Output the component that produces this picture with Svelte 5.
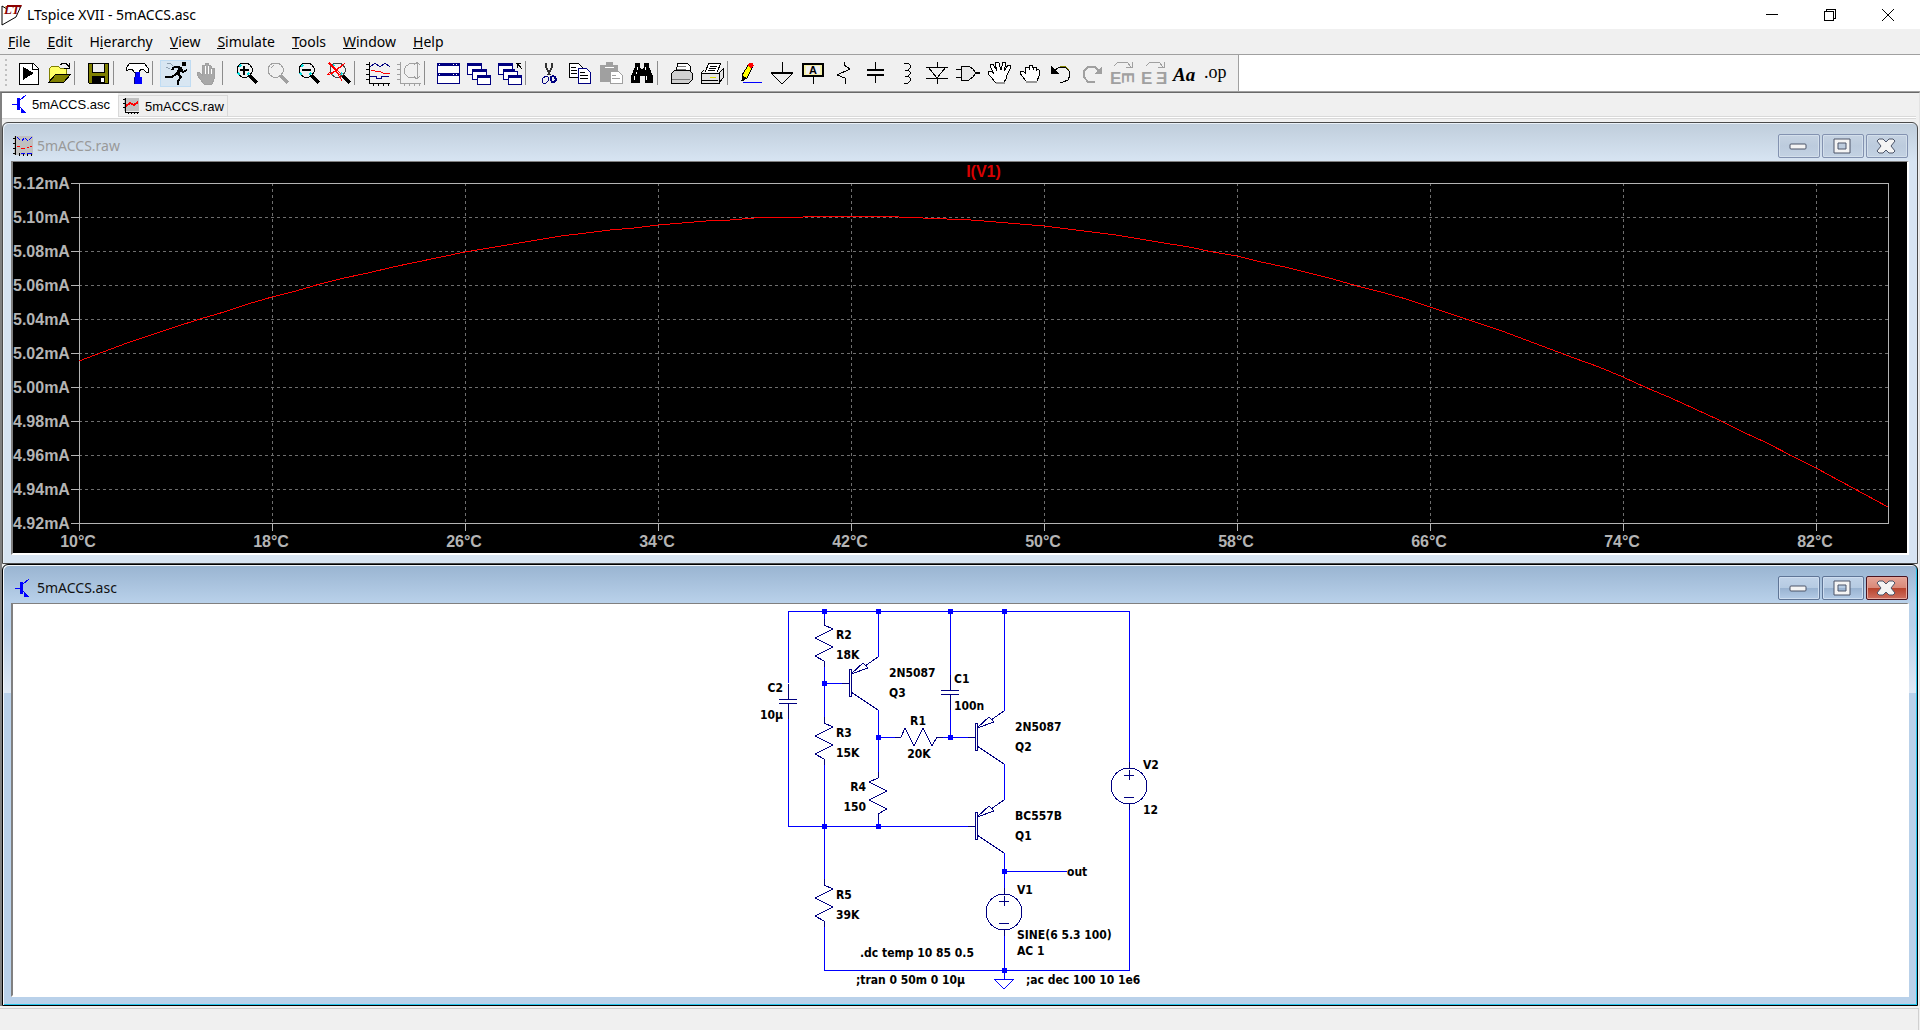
<script lang="ts">
  // One drawn path of an icon: d, stroke, fill, stroke width
  type Shape = [string, string?, string?, number?];
  type Glyph = { t: string; x: number; y: number; size: number; fill?: string; cls?: string; turn?: string };
  type Tool = { label: string; shapes: Shape[]; glyphs?: Glyph[]; active?: boolean; disabled?: boolean };

  const K = '#000';
  const N = '#000080';
  const G = '#a0a0a0';
  const W = '#fff';
  const OLIVE = '#808000';

  const lens = (line: string, dark: string): Shape[] => [
    ['M8 2h5l3 2 2 3v4l-2 3-3 2h-5l-3-2-2-3v-4l2-3z', line, 'none', 1],
    ['M16 15l7 7', dark, 'none', 3]
  ];
  const cyan: Shape = ['M5 6l2-2M13 14l2-2M4 12l2 2', '#00e0e0', 'none', 2];

  const smallWindows: Shape[] = [
    ['M0 2h14v11h-14z', N, W],
    ['M0 3h14', N, 'none', 3],
    ['M5 8h14v10h-14z', N, W],
    ['M5 9h14', N, 'none', 3],
    ['M10 14h13v9h-13z', N, W],
    ['M10 15h13', N, 'none', 3]
  ];

  const groups: Tool[][] = [
    [
      {
        label: 'New Schematic',
        shapes: [['M3 2h14l5 5v16h-19z', K, W], ['M16 2v6h6', K], ['M7 6l11 6-11 7z', 'none', K]]
      },
      {
        label: 'Open',
        shapes: [
          ['M2 20v-12l3-3h6l2 2h6v6', OLIVE, '#ffff66'],
          ['M2 21l7-8h15l-7 8z', K, OLIVE],
          ['M13 4l3-2h3l3 4M22 2v5h-5', K]
        ]
      }
    ],
    [
      {
        label: 'Save',
        shapes: [
          ['M2 2h20v20h-19l-1-1z', K, OLIVE],
          ['M6 2h12v9h-12z', K, '#efefef'],
          ['M6 15h13v7h-13z', 'none', K],
          ['M15 17h3v4h-3z', 'none', W]
        ]
      }
    ],
    [
      {
        label: 'Control Panel',
        shapes: [
          ['M1 8l3-5 4-1h11l4 5v4h-2l-3-3h-2l-2 3h-5l-2-3h-3l-2 2z', K, W],
          ['M10 11h5v5h2v7h-8v-7h1z', 'none', '#0000ff'],
          ['M10 11v5M9 17v6', '#000080']
        ]
      }
    ],
    [
      {
        label: 'Run',
        active: true,
        shapes: [
          ['M18 1h4v4h-4z', 'none', K],
          ['M17 6l-4 8', K, 'none', 4],
          ['M15 6h-5l-2 3M17 8l2 3 4-2', K, 'none', 2],
          ['M12 13l-4 3h-7M14 13l3 3-3 4v4', K, 'none', 2],
          ['M3 2l4 1 3 3M2 6l4 2', '#8fa0b0']
        ]
      },
      {
        label: 'Halt',
        disabled: true,
        shapes: [
          ['M7 14v-9l1-1h2v-2h3v2h2l1 1v2h3v11l-2 5h-8l-7-9v-2l2-1z', 'none', '#a8a8a8'],
          ['M10 5v8M13 4v9M16 6v7', W],
          ['M7 14v-9l1-1h2v-2h3v2h2l1 1v2h3v11l-2 5h-8l-7-9v-2l2-1z', G]
        ]
      }
    ],
    [
      { label: 'Zoom In', shapes: [...lens(K, K), cyan, ['M10 5v9M6 9h9', K, 'none', 2]] },
      { label: 'Pan', disabled: true, shapes: [...lens(G, G), ['M6 7l3-3', G, 'none', 1]] },
      { label: 'Zoom Out', shapes: [...lens(K, K), cyan, ['M6 9h9', K, 'none', 2]] },
      {
        label: 'Zoom Full Extents',
        shapes: [
          ...lens('#444', K),
          cyan,
          ['M1 2h3M2 1l6 7 7 12M18 2l-8 7-9 5M5 4l9 9M3 11l-3 3', '#ff0000', 'none', 1],
          ['M2 3l13 13M16 3l-12 11', '#ff0000', 'none', 1]
        ]
      }
    ],
    [
      {
        label: 'Autorange Y-axis',
        shapes: [
          ['M3 1v21h21M0 3h3M0 8h3M0 13h3M0 18h3M7 22v3M12 22v3M17 22v3M22 22v3', K],
          ['M4 6l5-4 5 4 5-4 5 4', N],
          ['M5 9l4 1 4 0 4 2h7', '#ff0000'],
          ['M4 15h6v2h5v-2h8', N]
        ]
      },
      {
        label: 'Plot Settings',
        disabled: true,
        shapes: [
          ['M3 1v21h21M0 3h3M0 8h3M0 13h3M0 18h3M7 22v3M12 22v3M17 22v3M22 22v3', G],
          ['M20 2h-6l-5 3-2 4v3l4 4h5l4 2', G],
          ['M20 1v17M17 4l3-3 3 3M17 15l3 3 3-3', G]
        ]
      }
    ],
    [
      {
        label: 'Tile Windows',
        shapes: [
          ['M1 2h22v20h-22z', N, W],
          ['M1 3h22M1 13h22', N, 'none', 3],
          ['M3 3h1M17 3h1M20 3h1M3 13h1M17 13h1M20 13h1', W]
        ]
      },
      { label: 'Cascade Windows', shapes: smallWindows },
      {
        label: 'Close All Windows',
        shapes: [...smallWindows, ['M17 0h9v10h-9z', 'none', '#f0f0f0'], ['M18 2h5M19 2v5M19 2l5 6', K]]
      }
    ],
    [
      {
        label: 'Cut',
        shapes: [
          ['M9 2v4l4 8M15 2v4l-4 8', '#333', 'none', 2],
          ['M6 17l3-2 2 1v4l-2 2h-3l-1-2z', N, 'none', 1],
          ['M14 16l2-1 2 1 1 3-2 2h-2l-1-2z', N, 'none', 2]
        ]
      },
      {
        label: 'Copy',
        shapes: [
          ['M1 2h9l4 4v10h-13z', K, W],
          ['M3 6h5M3 9h6M3 12h6', K],
          ['M10 7h8l4 4v11h-12z', N, W],
          ['M12 11h5M12 14h8M12 17h8', K]
        ]
      },
      {
        label: 'Paste',
        disabled: true,
        shapes: [
          ['M1 4h6v-3h7v3h5v17h-18z', 'none', G],
          ['M6 6h9', W],
          ['M11 10h8l4 4v8h-12z', G, W],
          ['M13 14h4M13 17h8', G]
        ]
      },
      {
        label: 'Find',
        shapes: [
          ['M5 2h5v4l2 3 2-3v-4h5v4l4 9v7h-8v-7h-5v7h-9v-7l4-9z', 'none', K],
          ['M7 6v3M15 6v3M4 15v4M16 15v4M6 11v2', W, 'none', 1]
        ]
      }
    ],
    [
      {
        label: 'Print Preview',
        shapes: [
          ['M7 10l2-8h9l3 3v6', K, W],
          ['M2 13l4-4h14l3 3v7l-3 3h-18z', K, '#d0d0d0'],
          ['M3 18h18M9 5h8M8 8h9', '#777']
        ]
      },
      {
        label: 'Print',
        shapes: [
          ['M5 11l4-9h12l-4 9', K, W],
          ['M1 12h18v10h-18zM19 12l4-4v9l-4 5M1 12l3-3', K, '#e4e4e4'],
          ['M10 5h7M9 7h7M8 9h7M2 19h16', K],
          ['M10 16h6', '#e0e000']
        ]
      }
    ],
    [
      {
        label: 'Draw Wire',
        shapes: [
          ['M3 14l7-11 4 2-6 12-5 3z', K, '#ffff00'],
          ['M10 2h4l1 3-3 2-3-2z', 'none', '#ff0000'],
          ['M2 20l2-5 4 2z', 'none', K],
          ['M4 21h19', '#0000ff']
        ]
      },
      { label: 'Place Ground', shapes: [['M12 1v11M1 12h22l-11 11z', K, 'none', 1], ['M1 12h22', K, 'none', 2]] },
      {
        label: 'Label Net',
        shapes: [['M2 3h20v12h-20z', K, '#f4f0a8', 2], ['M5 5h14v8h-14z', 'none', '#f0f0f0'], ['M12 16v7', K]],
        glyphs: [{ t: 'A', x: 8, y: 13, size: 11 }]
      },
      { label: 'Place Resistor', shapes: [['M12 1v3l6 4-13 6 8 3v6', K]] },
      { label: 'Place Capacitor', shapes: [['M12 1v7M12 15v7', K, 'none', 1], ['M4 9h17M4 14h17', K, 'none', 2]] },
      {
        label: 'Place Inductor',
        shapes: [['M10 2h4l2 2v3l-2 2h-3M14 9l2 2v2l-2 2h-3M14 15l2 2v3l-2 2h-4', K, 'none', 1]]
      },
      { label: 'Place Diode', shapes: [['M12 1v5M12 17v6M1 6h22M1 17h22M3 6l9 11 9-11', K]] },
      {
        label: 'Place Component',
        shapes: [['M5 5h8l4 3 2 3v2l-2 3-4 3h-8zM0 8h5M0 16h5', K, '#e8e8e8'], ['M19 12h5', K, 'none', 2]]
      },
      {
        label: 'Move',
        shapes: [
          ['M8 21l-3-4-4-4v-3h3l3 3-4-8 1-2h2l4 7-2-8 2-1 2 1 2 7 2-8h2l1 2-2 7 4-6h2l1 2-4 8-1 4-3 5z', K, W],
          ['M9 22h9', '#999', 'none', 2]
        ]
      },
      {
        label: 'Drag',
        shapes: [
          ['M8 20l-4-5-2-3v-2h3l2 2v-5l2-1 2 1v-2l3-1 1 3 3-1 1 2 2 1v6l-2 5z', K, W],
          ['M11 6v3M15 6v3M18 8v2', K],
          ['M8 21h11', '#999', 'none', 2]
        ]
      },
      {
        label: 'Undo',
        shapes: [['M4 11l6-5h6l4 4 1 4-2 5-5 2h-3', K, 'none', 1], ['M11 5h5l4 4', OLIVE], ['M2 5v8h8z', 'none', K]]
      },
      {
        label: 'Redo',
        disabled: true,
        shapes: [['M20 11l-5-5h-7l-4 4v6l4 5h7', G, 'none', 2], ['M22 5v8h-8z', 'none', G]]
      },
      {
        label: 'Rotate',
        disabled: true,
        shapes: [['M3 5l4-4h9l4 5M15 6h6v-5', G]],
        glyphs: [
          { t: 'E', x: -1, y: 23, size: 17, fill: G },
          { t: 'E', x: 0, y: 0, size: 17, fill: G, turn: 'translate(11 11) rotate(90)' }
        ]
      },
      {
        label: 'Mirror',
        disabled: true,
        shapes: [['M4 5l4-4h9l4 5M16 6h6v-5', G]],
        glyphs: [
          { t: 'E', x: -1, y: 23, size: 17, fill: G },
          { t: 'Ǝ', x: 14, y: 23, size: 17, fill: G }
        ]
      },
      { label: 'Text', shapes: [], glyphs: [{ t: 'Aa', x: 0, y: 20, size: 19, cls: 'script' }] },
      { label: 'SPICE Directive', shapes: [], glyphs: [{ t: '.op', x: 0, y: 17, size: 18, cls: 'serif' }] }
    ]
  ];

  // Menu entries: text before the access key, the key, the rest
  const menus = [
    ['', 'F', 'ile'],
    ['', 'E', 'dit'],
    ['H', 'i', 'erarchy'],
    ['', 'V', 'iew'],
    ['', 'S', 'imulate'],
    ['', 'T', 'ools'],
    ['', 'W', 'indow'],
    ['', 'H', 'elp']
  ];

  // Waveform pane
  let paneWidth = $state(1894);
  let paneHeight = $state(391);

  const tMin = 10;
  const tMax = 85;
  const iMin = 4.92;
  const iMax = 5.12;

  const left = 66;
  const top = 21;
  let right = $derived(paneWidth - 19);
  let bottom = $derived(paneHeight - 30);

  const temps = Array.from({ length: 10 }, (_, i) => tMin + i * 8);
  const currents = Array.from({ length: 11 }, (_, i) => iMax - i * 0.02);

  function px(t: number) {
    return Math.round(left + ((t - tMin) / (tMax - tMin)) * (right - left));
  }

  function py(i: number) {
    return Math.round(top + ((iMax - i) / (iMax - iMin)) * (bottom - top));
  }

  function current(t: number) {
    const k = t < 42 ? 0.000083 : 0.0000926;
    return 5.1005 - k * (t - 42) ** 2;
  }

  let trace = $derived(
    Array.from({ length: 76 }, (_, n) => tMin + n)
      .map((t) => `${px(t)},${py(current(t))}`)
      .join(' ')
  );

  // Schematic
  const wires = [
    'M788 683V611H1129V762M788 719V826H968M1129 810V970H824V926',
    'M824 611V620M824 666V719M824 765V880M824 683H842',
    'M878 611V657M878 710V773M878 818V826M878 737H896M943 737H968',
    'M950 611V675M950 710V737M1004 611V711M1004 764V800M1004 853V889M1004 935V979M1004 871H1067'
  ];

  const nodes = [
    [824, 611], [878, 611], [950, 611], [1004, 611],
    [824, 683], [878, 737], [950, 737],
    [824, 826], [878, 826], [1004, 871], [1004, 970]
  ];

  const resistors = [
    'translate(824 625)',
    'translate(824 723)',
    'translate(878 778) scale(-1 1)',
    'translate(824 885)',
    'translate(901 737) rotate(-90)'
  ];
  const capacitors = [[788, 701], [950, 692]];
  const transistors = [[878, 683], [1004, 737], [1004, 826]];
  const sources = [[1129, 786], [1004, 912]];

  const labels: [string, number, number, string?][] = [
    ['R2', 836, 639], ['18K', 836, 659],
    ['R3', 836, 737], ['15K', 836, 757],
    ['C2', 783, 692, 'end'], ['10µ', 783, 719, 'end'],
    ['2N5087', 889, 677], ['Q3', 889, 697],
    ['C1', 954, 683], ['100n', 954, 710],
    ['R1', 918, 725, 'middle'], ['20K', 919, 758, 'middle'],
    ['R4', 866, 791, 'end'], ['150', 866, 811, 'end'],
    ['2N5087', 1015, 731], ['Q2', 1015, 751],
    ['BC557B', 1015, 820], ['Q1', 1015, 840],
    ['V2', 1143, 769], ['12', 1143, 814],
    ['R5', 836, 899], ['39K', 836, 919],
    ['out', 1067, 876], ['V1', 1017, 894],
    ['SINE(6 5.3 100)', 1017, 939], ['AC 1', 1017, 955],
    ['.dc temp 10 85 0.5', 860, 957],
    [';tran 0 50m 0 10µ', 856, 984],
    [';ac dec 100 10 1e6', 1026, 984]
  ];
</script>

{#snippet transistorIcon()}
  <svg class="doc-icon" viewBox="0 0 16 20" width="16" height="20" aria-hidden="true">
    <path d="M0 10h5M8 6l6-5M8 13l5 5" stroke="#0000ff" fill="none" />
    <path d="M5 4h3v12h-3zM9 13l5 6h-5z" fill="#0000ff" />
  </svg>
{/snippet}

{#snippet childButtons()}
  <div class="child-buttons">
    <button aria-label="Minimize">
      <svg viewBox="0 0 40 22" width="40" height="22"><rect x="11" y="9" width="16" height="5" rx="1" fill="#f4f4f4" stroke="#4c5468" /></svg>
    </button>
    <button aria-label="Maximize">
      <svg viewBox="0 0 40 22" width="40" height="22">
        <path d="M11 4h16v14h-16zM15 8v6h8v-6z" fill="#f4f4f4" fill-rule="evenodd" stroke="#4c5468" />
      </svg>
    </button>
    <button class="close" aria-label="Close">
      <svg viewBox="0 0 40 22" width="40" height="22">
        <path d="M12 4h4l3 3 3-3h4l2 2-4 5 4 5-2 2h-4l-3-3-3 3h-4l-2-2 4-5-4-5z" fill="#f4f4f4" stroke="#4c5468" />
      </svg>
    </button>
  </div>
{/snippet}

<div class="app">
  <header class="titlebar">
    <svg class="logo" viewBox="0 0 22 24" width="22" height="24" aria-hidden="true">
      <path d="M2 3l5 3M2 3v19l14-8 5-11" fill="none" stroke="#000" />
      <path d="M7 2h15l-1 2h-14z" fill="#8b0000" />
      <text x="4" y="11" class="logo-text">LT</text>
    </svg>
    <h1>LTspice XVII - 5mACCS.asc</h1>
    <div class="frame-buttons">
      <button aria-label="Minimize">
        <svg viewBox="0 0 12 12" width="12" height="12"><path d="M0 5h12v1h-12z" fill="#000" /></svg>
      </button>
      <button aria-label="Restore">
        <svg viewBox="0 0 12 12" width="12" height="12">
          <path d="M0 2h10v10h-10zM1 3v8h8v-8zM2 0h10v10h-2v-1h1v-8h-8v1h-1z" fill="#000" fill-rule="evenodd" />
        </svg>
      </button>
      <button aria-label="Close">
        <svg viewBox="0 0 12 12" width="12" height="12"><path d="M0 0l12 12M12 0l-12 12" stroke="#000" /></svg>
      </button>
    </div>
  </header>

  <nav class="menubar" aria-label="Main menu">
    {#each menus as [before, key, after]}
      <button>{before}<span class="key">{key}</span>{after}</button>
    {/each}
  </nav>

  <div class="toolbar-row">
    <div class="toolbar" role="toolbar" aria-label="Tools">
      <span class="grip"></span>
      {#each groups as group}
        <div class="group">
          {#each group as tool}
            <button class:active={tool.active} disabled={tool.disabled} aria-label={tool.label} title={tool.label}>
              <svg viewBox="0 0 24 24" width="24" height="24">
                {#each tool.shapes as [d, stroke, fill, width]}
                  <path {d} stroke={stroke} fill={fill ?? 'none'} stroke-width={width ?? 1} />
                {/each}
                {#each tool.glyphs ?? [] as g}
                  <text x={g.x} y={g.y} font-size={g.size} fill={g.fill ?? K} class={g.cls ?? 'block'} transform={g.turn}>{g.t}</text>
                {/each}
              </svg>
            </button>
          {/each}
        </div>
      {/each}
    </div>
  </div>

  <div class="workspace">
    <div class="tabs" role="tablist">
      <button class="tab selected" role="tab" aria-selected="true">
        {@render transistorIcon()}
        <span>5mACCS.asc</span>
      </button>
      <button class="tab" role="tab" aria-selected="false">
        <svg class="doc-icon" viewBox="0 0 16 16" width="16" height="16" aria-hidden="true">
          <path d="M1 0h15v13h-15z" fill="#c0c0c0" />
          <path d="M2 0v14h14M0 1h2M0 5h2M0 9h2M5 14v2M8 14v2M11 14v2M14 14v2" fill="none" stroke="#000" />
          <path d="M3 8l4-3 4 2 4-3" fill="none" stroke="#f00" stroke-width="2" />
        </svg>
        <span>5mACCS.raw</span>
      </button>
    </div>

    <section class="child">
      <div class="caption">
        <svg class="doc-icon" viewBox="0 0 20 20" width="20" height="20" aria-hidden="true">
          <path d="M1 0h19v19h-19z" fill="#c0c0c0" />
          <path d="M2 0v19M0 2h2M0 7h2M0 12h2M0 17h2M6 17v3M10 17v3M14 17v3M18 17v3" fill="none" stroke="#000" />
          <path d="M4 1l3 3M9 5l2-3M12 2l3 3M16 4l3-3M8 17h4M14 17h5" fill="none" stroke="#0000ff" />
          <path d="M4 10h3M8 12h4M14 11h2M17 10h2" fill="none" stroke="#f00" />
        </svg>
        <h2>5mACCS.raw</h2>
        {@render childButtons()}
      </div>
      <div class="pane waveform" bind:clientWidth={paneWidth} bind:clientHeight={paneHeight}>
        <svg width={paneWidth} height={paneHeight} role="img" aria-label="I(V1) against temperature">
          <text class="trace-name" x={(left + right) / 2} y="15">I(V1)</text>
          {#each currents as i}
            <line class="grid" x1={left} x2={right} y1={py(i)} y2={py(i)} />
            <line class="axis" x1={left - 8} x2={left} y1={py(i)} y2={py(i)} />
            <text class="tick" x="0" y={py(i) + 6}>{i.toFixed(2)}mA</text>
          {/each}
          {#each temps as t}
            <line class="grid" x1={px(t)} x2={px(t)} y1={top} y2={bottom} />
            <line class="axis" x1={px(t)} x2={px(t)} y1={bottom} y2={bottom + 8} />
            <text class="tick centered" x={px(t) - 1} y={bottom + 24}>{t}°C</text>
          {/each}
          <rect class="axis" x={left} y={top} width={right - left} height={bottom - top} />
          <polyline class="trace" points={trace} />
        </svg>
      </div>
    </section>

    <section class="child current">
      <div class="caption">
        {@render transistorIcon()}
        <h2>5mACCS.asc</h2>
        {@render childButtons()}
      </div>
      <div class="pane schematic">
        <svg viewBox="740 604 440 390" width="440" height="390" role="img" aria-label="Current source schematic">
          {#each wires as d}
            <path class="wire" {d} />
          {/each}
          {#each nodes as [x, y]}
            <rect class="node" x={x - 2} y={y - 2} width="5" height="5" />
          {/each}

          {#each resistors as transform}
            <path class="part" d="M0 -6V0L9 4L-9 13L9 22L-9 31L0 36V42" {transform} />
          {/each}
          {#each capacitors as [x, y]}
            <path class="part" d="M0 -17V-2M-9 -2H9M-9 2H9M0 2V18" transform="translate({x} {y})" />
          {/each}
          {#each transistors as [x, y]}
            <path
              class="part"
              d="M-36 0H-29M-29 -14H-27V13H-29ZM-27 9L0 27M0 -26L-13 -17M-27 -9L-15 -20L-10 -15Z"
              transform="translate({x} {y})"
            />
          {/each}
          {#each sources as [x, y]}
            <g class="part" transform="translate({x} {y})">
              <circle r="18" />
              <path d="M0 -24V-18M0 18V24M-5 -11H5M0 -16V-6M-5 11H5" />
            </g>
          {/each}
          <path class="wire" d="M994 979H1014L1004 989Z" />

          {#each labels as [text, x, y, anchor]}
            <text class="label" {x} {y} text-anchor={anchor ?? 'start'}>{text}</text>
          {/each}
        </svg>
      </div>
    </section>
  </div>

  <footer class="statusbar"></footer>
</div>

<style>
  :global(body) {
    margin: 0;
    background: #f0f0f0;
  }

  .app {
    display: flex;
    flex-direction: column;
    height: 100vh;
    overflow: hidden;
    font-family: 'Noto Sans', 'Open Sans', sans-serif;
    font-size: 14px;
    color: #000;
  }

  button {
    margin: 0;
    padding: 0;
    border: 0;
    background: none;
    font: inherit;
    color: inherit;
  }

  svg {
    display: block;
  }

  h1,
  h2 {
    margin: 0;
    font-size: 14px;
    font-weight: 400;
    line-height: 20px;
  }

  /* Title bar */
  .titlebar {
    display: flex;
    align-items: center;
    flex: none;
    height: 29px;
    padding-right: 3px;
    background: #fff;
  }

  .logo-text {
    font: italic bold 13px 'Liberation Serif', serif;
    fill: #8b0000;
  }

  .titlebar h1 {
    flex: 1;
    padding-left: 5px;
  }

  .frame-buttons {
    display: flex;
    height: 28px;
  }

  .frame-buttons button {
    display: grid;
    place-items: center;
    width: 58px;
  }

  /* Menu */
  .menubar {
    display: flex;
    flex: none;
    height: 25px;
    border-bottom: 1px solid #a0a0a0;
    background: #f0f0f0;
    gap: 1px;
  }

  .menubar button {
    padding: 0 8px;
    line-height: 24px;
  }

  /* Access key underline, just below the baseline */
  .key {
    background: linear-gradient(#000, #000) 0 calc(100% - 2px) / 100% 1px no-repeat;
  }

  /* Toolbar */
  .toolbar-row {
    display: flex;
    flex: none;
    height: 36px;
    border-bottom: 1px solid #a0a0a0;
    background: #fff;
  }

  .toolbar {
    display: flex;
    align-items: center;
    padding-right: 7px;
    border-right: 1px solid #a0a0a0;
    background: #f0f0f0;
  }

  .grip {
    width: 2px;
    height: 28px;
    margin: 0 5px;
    background: repeating-linear-gradient(#c0c0c0 0 2px, transparent 2px 5px);
  }

  .group {
    display: flex;
  }

  .group + .group {
    padding-left: 7px;
    border-left: 1px solid #8c8c8c;
    height: 24px;
    align-items: center;
  }

  .group button {
    box-sizing: border-box;
    display: grid;
    place-items: center;
    width: 31px;
    height: 27px;
    border: 1px solid transparent;
  }

  .group button.active {
    border-color: #c0dcf3;
    background: #d8e6f2;
  }

  .toolbar svg {
    overflow: visible;
  }

  .toolbar path,
  .doc-icon path {
    shape-rendering: crispEdges;
  }

  .block {
    font-family: 'Liberation Sans', Arial, sans-serif;
    font-weight: 700;
  }

  .script {
    font-family: 'Liberation Serif', serif;
    font-style: italic;
    font-weight: 700;
  }

  .serif {
    font-family: 'Liberation Serif', serif;
  }

  /* Workspace */
  .workspace {
    display: flex;
    flex-direction: column;
    flex: 1;
    min-height: 0;
    padding-right: 1px;
    border-top: 1px solid #696969;
    border-left: 2px solid #808080;
    border-right: 1px solid #e3e3e3;
    background: #f0f0f0;
  }

  .tabs {
    display: flex;
    align-items: flex-end;
    flex: none;
    box-sizing: border-box;
    height: 26px;
    margin: 0 2px 3px 0;
    border-bottom: 1px solid #d9d9d9;
    box-shadow: inset 0 -1px #fff, inset 0 -2px #d9d9d9;
    font-family: 'Liberation Sans', Arial, sans-serif;
    font-size: 13px;
  }

  .tab {
    display: flex;
    align-items: center;
    box-sizing: border-box;
    height: 22px;
    padding: 0 3px 0 4px;
    margin-bottom: 1px;
    border: 1px solid #d9d9d9;
    gap: 6px;
  }

  .tab.selected {
    height: 24px;
    padding: 0 7px 2px 9px;
    border-color: #fff;
    background: #fff;
    gap: 4px;
  }

  /* Child windows */
  .child {
    display: flex;
    flex-direction: column;
    flex: 1;
    min-height: 0;
    box-sizing: border-box;
    padding: 0 8px 8px;
    border: 1px solid #4a4a4a;
    border-radius: 6px 6px 0 0;
    background: linear-gradient(#bfcddb, #d7e4f2 38px, #d7e4f2);
    box-shadow: inset 1px 1px #eaf1f8;
  }

  .child.current {
    border-color: #000;
    background: linear-gradient(#99b4d1, #b9d1ea 38px, #b9d1ea 60px, #dfe9f5 128px, #b9d1ea 128px);
    box-shadow: inset 1px 1px #f4f8fc, inset -1px -1px #25c4ea;
  }

  .caption {
    display: flex;
    align-items: center;
    flex: none;
    height: 38px;
    padding: 7px 0 0 2px;
    box-sizing: border-box;
    gap: 4px;
  }

  .caption h2 {
    flex: 1;
    color: #999;
  }

  .current .caption {
    padding-left: 4px;
    gap: 6px;
  }

  .current h2 {
    color: #111;
  }

  .child-buttons {
    display: flex;
    gap: 2px;
    padding-right: 1px;
  }

  .child-buttons button {
    width: 42px;
    height: 24px;
    border: 1px solid #8392b0;
    border-radius: 2px;
    background: linear-gradient(#c6d3e2, #bccbdd 50%, #c3d2e3);
    box-shadow: inset 0 0 0 1px #d3dfeb;
  }

  .current .child-buttons button {
    border-color: #5f7596;
    background: linear-gradient(#c1d3e8, #b5cae2 50%, #98b2d0 50%, #b4cbe6);
    box-shadow: inset 0 0 0 1px #cfdef0;
  }

  .current .child-buttons button.close {
    border-color: #4a1420;
    background: linear-gradient(#e5a598, #d98878 50%, #b8422c 50%, #cf7060);
    box-shadow: inset 0 0 0 1px #e8a99c;
  }

  .pane {
    flex: 1;
    min-height: 0;
    border: solid #808080;
    border-width: 1px 2px 2px;
    border-right-color: #fff;
    border-bottom-color: #fff;
    overflow: hidden;
  }

  .waveform {
    background: #000;
    font-family: 'Liberation Sans', Arial, sans-serif;
    font-size: 16px;
    font-weight: 700;
  }

  .tick {
    fill: #b4b4b4;
  }

  .centered,
  .trace-name {
    text-anchor: middle;
  }

  .trace-name {
    fill: #d80000;
  }

  .axis {
    fill: none;
    stroke: #b4b4b4;
    shape-rendering: crispEdges;
  }

  .grid {
    stroke: #6e6e6e;
    stroke-dasharray: 3 3;
    shape-rendering: crispEdges;
  }

  .trace {
    fill: none;
    stroke: #f00;
    shape-rendering: crispEdges;
  }

  .schematic {
    display: flex;
    justify-content: center;
    background: #fff;
  }

  .schematic svg {
    flex: none;
  }

  .wire {
    fill: none;
    stroke: #0000ff;
    shape-rendering: crispEdges;
  }

  .node {
    fill: #0000ff;
  }

  .part {
    fill: none;
    stroke: #000080;
    shape-rendering: crispEdges;
  }

  .label {
    font: bold 12px 'DejaVu Sans Condensed', 'DejaVu Sans', sans-serif;
    fill: #000;
  }

  /* Status bar */
  .statusbar {
    flex: none;
    height: 21px;
    margin: 2px 1px 0 0;
    border-top: 1px solid #d0d0d0;
    border-right: 1px solid #d0d0d0;
    background: #f0f0f0;
  }
</style>
